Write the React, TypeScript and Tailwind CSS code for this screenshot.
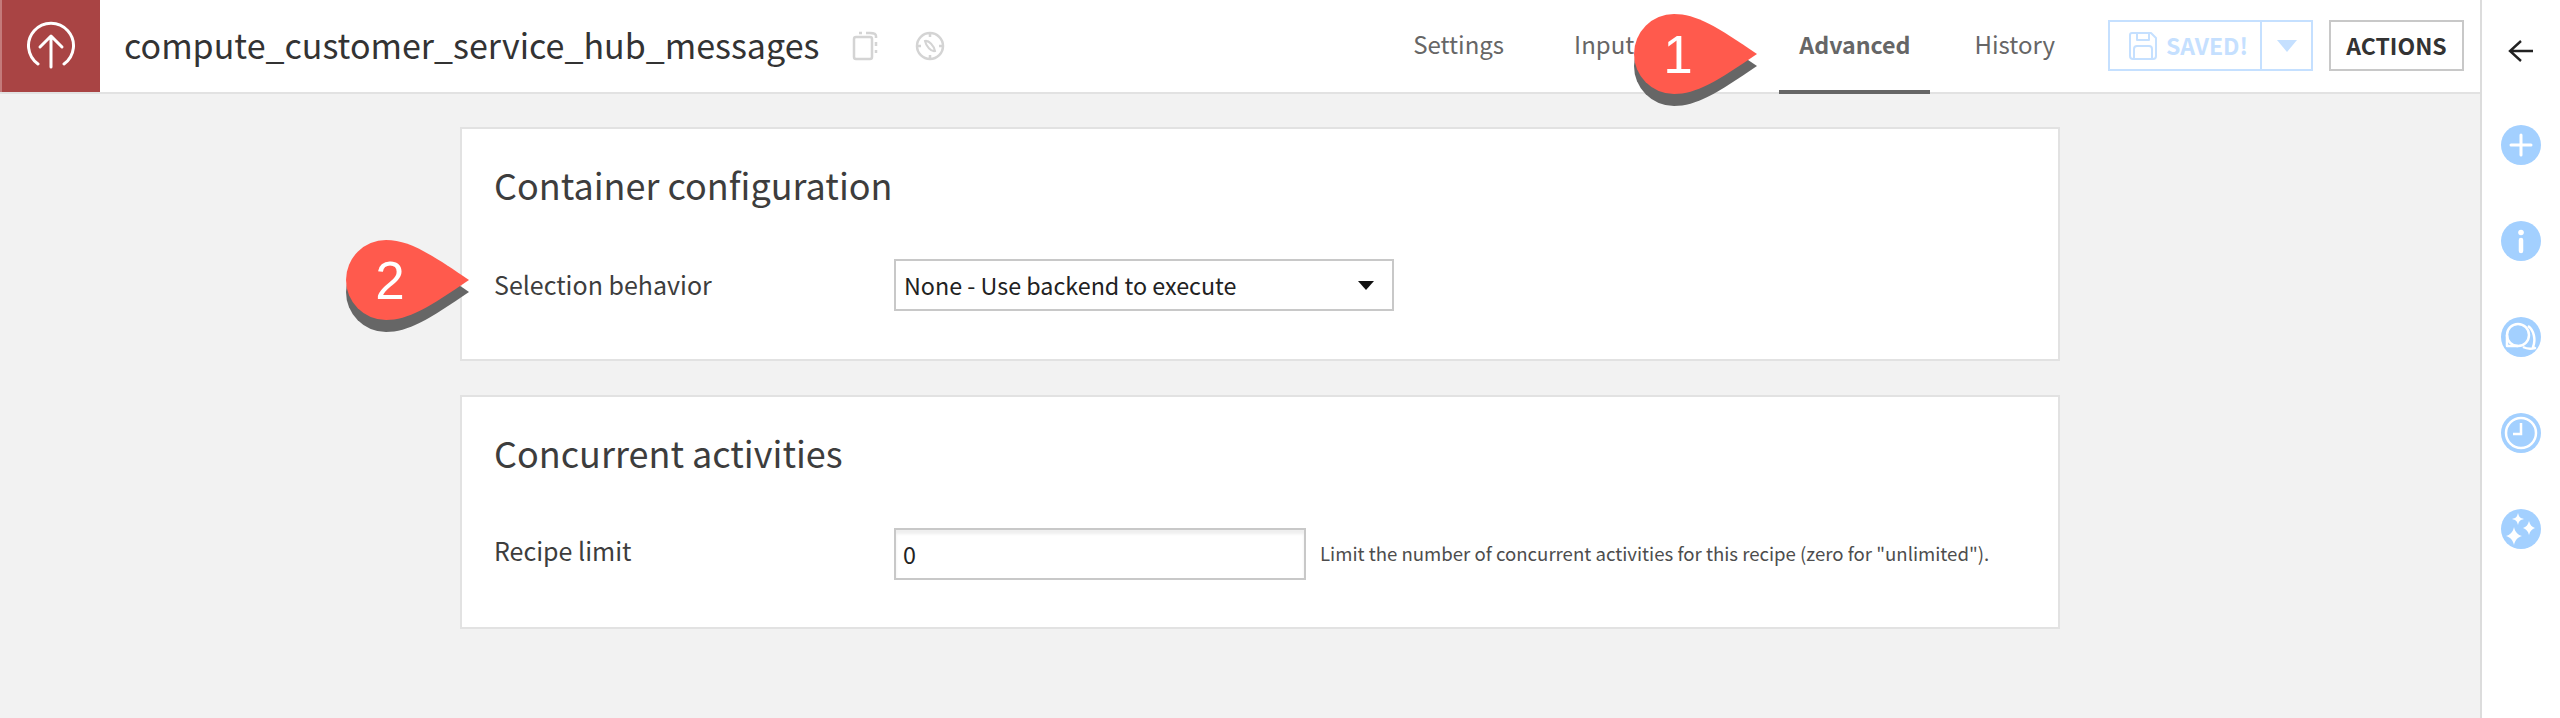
import type { ReactNode } from 'react'

const Marker = ({ label, className }: { label: string; className: string }) => (
  <div className={`absolute w-[124px] h-[94px] ${className}`}>
    <svg width="124" height="94" viewBox="0 0 124 94" className="absolute inset-0">
      <path d="M40 12C62 12 82 24 123 52C82 80 62 92 40 92A40 40 0 0 1 40 12Z" fill="#666666" />
      <path d="M40 0C62 0 82 12 123 40C82 68 62 80 40 80A40 40 0 0 1 40 0Z" fill="#ff5a4d" />
    </svg>
    <span className="absolute left-[22px] top-[11px] w-[44px] text-center text-[53px] leading-[60px] text-white font-['Liberation_Sans',sans-serif]">
      {label}
    </span>
  </div>
)

const SideCircle = ({ children }: { children: ReactNode }) => (
  <svg width="42" height="42" viewBox="0 0 42 42">
    <circle cx="21" cy="21" r="20" fill="#a3d0ff" />
    {children}
  </svg>
)

const Card = ({ title, children }: { title: string; children: ReactNode }) => (
  <section className="w-[1600px] h-[234px] bg-white border-2 border-[#e2e2e2] pl-[32px]">
    <h2 className="mt-[31px] text-[36px] leading-[48px] text-[#3d3d3d]">{title}</h2>
    {children}
  </section>
)

export default function App() {
  return (
    <div className="relative flex w-[2560px] h-[718px] overflow-hidden bg-[#f2f2f2] font-['Noto_Sans_CJK_SC','Noto_Sans',sans-serif]">
      <main className="flex flex-col w-[2480px]">
        <header className="flex h-[94px] items-start bg-white border-b-2 border-[#e2e2e2]">
          <div className="flex items-center justify-center w-[100px] h-[92px] bg-[#a94444] border-l-2 border-[#c47a7a]">
            <svg width="50" height="50" viewBox="0 0 50 50" fill="none" stroke="white" strokeWidth="3" strokeLinecap="round" strokeLinejoin="round">
              <path d="M12 43A22.5 22.5 0 1 1 38 43" />
              <path d="M25 46V16M14 26L25 15L36 26" />
            </svg>
          </div>
          <h1 className="ml-[24px] mt-[19px] text-[34px] leading-[52px] text-[#333333]">compute_customer_service_hub_messages</h1>
          <svg className="ml-[33px] mt-[31px]" width="28" height="30" viewBox="0 0 28 30" fill="none" stroke="#d4d4d4" strokeWidth="2.5" strokeLinejoin="round">
            <rect x="2" y="6" width="18" height="22" rx="2" />
            <path d="M7 2H10M14 2H18C21 2 24 2 24 5V7M24 11V15M24 19V22" />
          </svg>
          <svg className="ml-[35px] mt-[31px]" width="30" height="30" viewBox="0 0 30 30" fill="none" stroke="#d4d4d4" strokeWidth="2.5">
            <circle cx="15" cy="15" r="13" />
            <path d="M15 2V6M2 15H6M15 24V28M24 15H28" />
            <path d="M10 10C14 9 19 15 20 20C16 21 11 15 10 10Z" fill="none" strokeWidth="2" />
          </svg>
          <nav className="ml-auto flex h-[92px] text-[24px] text-[#666666]">
            <span className="px-[20px] pt-[26px] leading-[36px]">Settings</span>
            <span className="ml-[30px] px-[20px] pt-[26px] leading-[36px]">Input / Output</span>
            <span className="ml-[25px] h-[94px] px-[20px] pt-[26px] text-[23.2px] leading-[36px] font-semibold border-b-4 border-[#666666]">Advanced</span>
            <span className="ml-[24px] px-[20px] pt-[26px] leading-[36px]">History</span>
          </nav>
          <div className="ml-[33px] mt-[20px] flex h-[51px] w-[205px] border-2 border-[#c5e0ff]">
            <div className="flex items-center gap-[8px] w-[152px] pl-[18px] border-r-2 border-[#c5e0ff] text-[23px] font-bold text-[#c5e0ff]">
              <svg width="30" height="30" viewBox="0 0 30 30" fill="none" stroke="#c5e0ff" strokeWidth="2" strokeLinejoin="round">
                <path d="M4 2H23L28 7V25C28 27 27 28 25 28H5C3 28 2 27 2 25V4C2 3 3 2 4 2Z" />
                <path d="M9 2V9H21V2M6 28V18C6 16 7 15 9 15H21C23 15 24 16 24 18V28" />
              </svg>
              <span className="leading-none">SAVED!</span>
            </div>
            <div className="flex flex-1 items-center justify-center">
              <svg width="20" height="12" viewBox="0 0 20 12"><path d="M0 0H20L10 12Z" fill="#c5e0ff" /></svg>
            </div>
          </div>
          <div className="ml-[16px] mt-[20px] mr-[16px] flex items-center justify-center h-[51px] w-[135px] border-2 border-[#c8c8c8] text-[23px] font-semibold text-[#333333]">
            ACTIONS
          </div>
        </header>
        <div className="flex flex-col gap-[34px] pt-[33px] pl-[460px]">
          <Card title="Container configuration">
            <div className="flex items-center mt-[51px]">
              <span className="w-[400px] -mt-[2px] text-[25px] leading-[36px] text-[#3d3d3d]">Selection behavior</span>
              <div className="flex items-center justify-between w-[500px] h-[52px] pl-[8px] pr-[18px] border-2 border-[#c8c8c8] text-[23.3px] text-[#222222]">
                <span>None - Use backend to execute</span>
                <svg width="16" height="9" viewBox="0 0 16 9"><path d="M0 0H16L8 9Z" fill="#111111" /></svg>
              </div>
            </div>
          </Card>
          <Card title="Concurrent activities">
            <div className="flex items-center mt-[52px]">
              <span className="w-[400px] -mt-[8px] text-[25px] leading-[36px] text-[#3d3d3d]">Recipe limit</span>
              <input
                readOnly
                value="0"
                className="w-[412px] h-[52px] pl-[7px] border-2 border-[#c8c8c8] text-[23.3px] text-[#222222] shadow-[inset_0_4px_3px_#efefef] outline-none"
              />
              <span className="ml-[14px] -mt-[2px] text-[18.6px] leading-[26px] text-[#4d4d4d]">
                Limit the number of concurrent activities for this recipe (zero for "unlimited").
              </span>
            </div>
          </Card>
        </div>
      </main>
      <aside className="flex flex-col items-center w-[80px] h-[718px] bg-white border-l-2 border-[#dcdcdc]">
        <svg className="mt-[39px] mb-[61px]" width="26" height="24" viewBox="0 0 26 24" fill="none" stroke="#222222" strokeWidth="2.4">
          <path d="M25 12H2M13 2L2 12L13 22" />
        </svg>
        <div className="flex flex-col gap-[54px]">
          <SideCircle>
            <path d="M21 11V31M11 21H31" stroke="white" strokeWidth="3" strokeLinecap="round" />
          </SideCircle>
          <SideCircle>
            <circle cx="21" cy="12.500" r="2.800" fill="white" />
            <path d="M21 20V31" stroke="white" strokeWidth="4.500" strokeLinecap="round" />
          </SideCircle>
          <SideCircle>
            <circle cx="18" cy="19" r="11" fill="none" stroke="white" strokeWidth="2.500" />
            <path d="M7 19V30H18" fill="none" stroke="white" strokeWidth="2.500" strokeLinejoin="round" />
            <path d="M28 10C34 14 36 24 33 31L35 32C31 33 27 33 23 31" fill="none" stroke="white" strokeWidth="2.500" strokeLinejoin="round" />
          </SideCircle>
          <SideCircle>
            <circle cx="21" cy="21" r="15" fill="none" stroke="white" strokeWidth="2.500" />
            <path d="M21 11V22H13" fill="none" stroke="white" strokeWidth="2.500" />
          </SideCircle>
          <SideCircle>
            <path d="M18 5C19 9 20 10 24 11C20 12 19 13 18 17C17 13 16 12 12 11C16 10 17 9 18 5Z" fill="white" />
            <path d="M29 13C30 17 32 19 35 20C32 21 30 23 29 27C28 23 26 21 23 20C26 19 28 17 29 13Z" fill="white" />
            <path d="M14 19C15 24 18 27 22 28C18 29 15 32 14 37C13 32 10 29 6 28C10 27 13 24 14 19Z" fill="white" />
          </SideCircle>
        </div>
      </aside>
      <Marker label="1" className="left-[1634px] top-[14px]" />
      <Marker label="2" className="left-[346px] top-[240px]" />
    </div>
  )
}
